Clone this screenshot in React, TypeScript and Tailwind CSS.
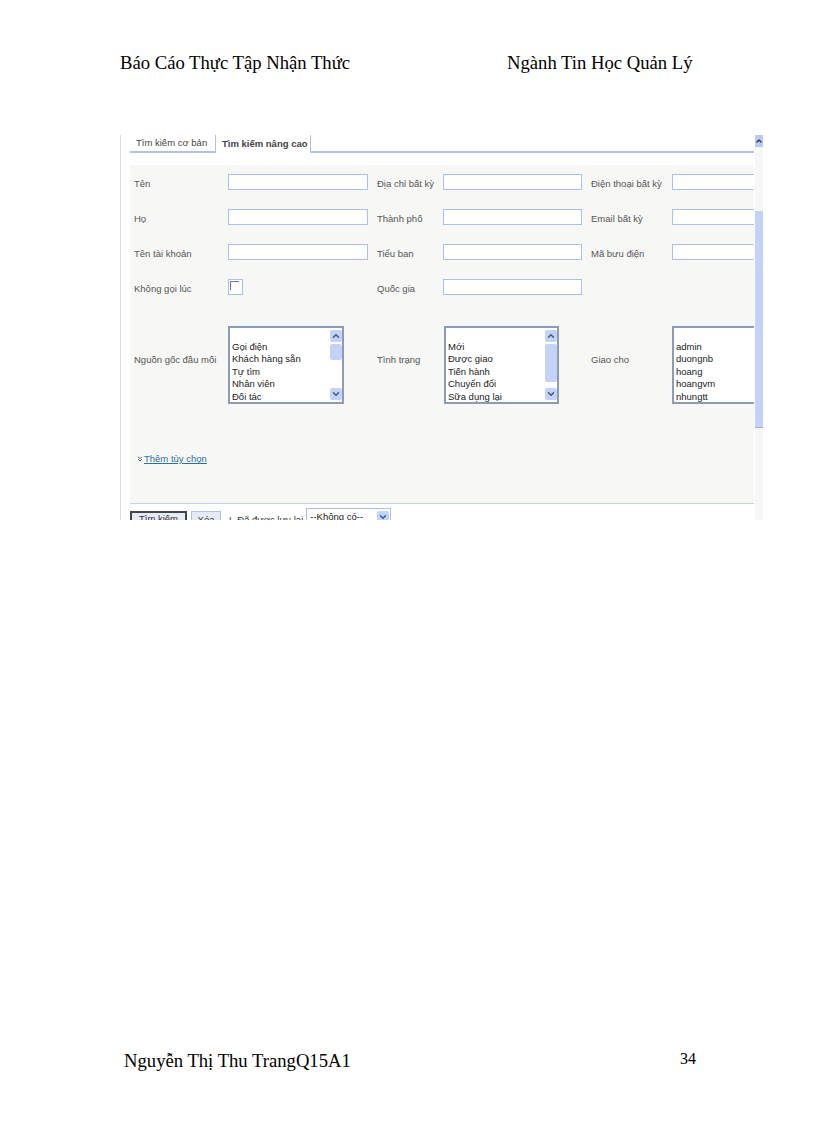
import React from 'react';
import { ChevronUp, ChevronDown, ChevronsDown } from 'lucide-react';

const serif = "font-['Liberation_Serif',serif]";

function Label({ text, indent }: { text: string; indent?: boolean }) {
  return <div className={`pt-[3px] text-[9.5px] leading-[12px] text-[#555] whitespace-nowrap ${indent ? 'pl-[9px]' : ''}`}>{text}</div>;
}

function Field() {
  return <input readOnly className="h-[16px] w-full border border-[#a9c0ee] bg-white block" />;
}

function ScrollBtn({ down }: { down?: boolean }) {
  return (
    <div className="w-[12px] h-[12px] shrink-0 bg-[#c3d2f7] rounded-[2px] flex items-center justify-center text-[#3d5a8c]">
      {down ? <ChevronDown size={10} strokeWidth={3.5} /> : <ChevronUp size={10} strokeWidth={3.5} />}
    </div>
  );
}

function ListBox({ items, thumb, bar = true, className }: { items: string[]; thumb?: string; bar?: boolean; className: string }) {
  return (
    <div className={`h-[78px] border-2 border-[#8c9cb8] bg-white flex overflow-hidden ${className}`}>
      <div className="flex-1 pl-[2px] pt-[13px] text-[9.5px] leading-[12.4px] text-[#222] whitespace-nowrap">
        {items.map(item => <div key={item}>{item}</div>)}
      </div>
      {bar && (
        <div className="w-[12px] py-[2px] flex flex-col items-center">
          <ScrollBtn />
          <div className="flex-1 w-[12px] pt-[2px]">
            <div className={`bg-[#c3d2f7] rounded-[2px] w-[12px] ${thumb}`} />
          </div>
          <ScrollBtn down />
        </div>
      )}
    </div>
  );
}

export default function App() {
  return (
    <div className="h-[1123px] w-[816px] bg-white flex flex-col text-black font-['Liberation_Sans',sans-serif]">
      {/* Page header */}
      <div className={`flex pl-[120px] pt-[51px] text-[18.67px] leading-[24px] ${serif}`}>
        <span className="w-[387px]">Báo Cáo Thực Tập Nhận Thức</span>
        <span>Ngành Tin Học Quản Lý</span>
      </div>

      {/* Pasted screenshot */}
      <div className="mt-[60px] ml-[120px] w-[644px] h-[385px] overflow-hidden flex border-l border-[#d5dfd0]">
        <div className="w-[624px] ml-[9px] overflow-hidden shrink-0">
          {/* Tabs */}
          <div className="h-[18px] flex items-end border-b-2 border-[#b4c4d8]">
            <div className="w-[85px] h-[16px] pl-[6px] pt-[2px] text-[9.5px] leading-[12px] text-[#444] whitespace-nowrap">Tìm kiếm cơ bản</div>
            <div className="w-[96px] h-[18px] -mb-[2px] pl-[6px] pt-[3px] bg-white border-x border-[#b4c4d8] text-[9.5px] leading-[12px] font-bold text-[#444] whitespace-nowrap">Tìm kiếm nâng cao</div>
          </div>

          {/* Search form */}
          <div className="mt-[12px] h-[339px] bg-[#f7f7f6] border-b border-[#c5d2e6] pl-[4px] pt-[9px]">
            <div className="grid grid-cols-[94px_140px_75px_139px_90px_140px] gap-y-[19px] items-center w-[700px]">
              <Label text="Tên" /><Field /><Label text="Địa chỉ bất kỳ" indent /><Field /><Label text="Điện thoại bất kỳ" indent /><Field />
              <Label text="Họ" /><Field /><Label text="Thành phố" indent /><Field /><Label text="Email bất kỳ" indent /><Field />
              <Label text="Tên tài khoản" /><Field /><Label text="Tiểu ban" indent /><Field /><Label text="Mã bưu điện" indent /><Field />
              <Label text="Không gọi lúc" />
              <div className="w-[15px] h-[16px] border border-[#a9c0ee] bg-white p-[1px]">
                <div className="h-[9px] w-[9px] border-t border-l border-[#777]" />
              </div>
              <Label text="Quốc gia" indent /><Field /><div /><div />

              <div className="self-start mt-[37px]"><Label text="Nguồn gốc đầu mối" /></div>
              <ListBox className="mt-[12px] w-[116px]" thumb="h-[16px]" items={['Gọi điện', 'Khách hàng sẵn', 'Tự tìm', 'Nhân viên', 'Đối tác']} />
              <div className="self-start mt-[37px]"><Label text="Tình trạng" indent /></div>
              <ListBox className="mt-[12px] ml-[1px] w-[115px]" thumb="h-[38px]" items={['Mới', 'Được giao', 'Tiến hành', 'Chuyển đổi', 'Sữa dụng lại']} />
              <div className="self-start mt-[37px]"><Label text="Giao cho" indent /></div>
              <ListBox className="mt-[12px] w-[140px]" bar={false} items={['admin', 'duongnb', 'hoang', 'hoangvm', 'nhungtt']} />
            </div>

            <div className="mt-[49px] pl-[2px] flex items-center text-[9.5px] leading-[12px]">
              <ChevronsDown size={8} strokeWidth={3} className="text-[#4a5f80]" />
              <span className="underline text-[#2a70a8]">Thêm tùy chọn</span>
            </div>
          </div>

          {/* Action bar */}
          <div className="flex items-start pt-[4px] text-[9.5px] leading-[12px] text-[#333]">
            <div className="mt-[3px] w-[57px] h-[16px] border-2 border-[#444] bg-[#e6e9f6] text-center">Tìm kiếm</div>
            <div className="mt-[3px] ml-[4px] w-[30px] h-[16px] border border-[#b4c4d8] bg-[#e6e9f6] text-center pt-[2px]">Xóa</div>
            <span className="mt-[6px] ml-[8px]">L</span>
            <span className="mt-[6px] ml-[3px]">Đã được lưu lại</span>
            <div className="ml-[3px] w-[85px] h-[18px] border border-[#a9c0ee] bg-white flex items-center justify-between pl-[3px] pr-[1px] text-[#222]">
              <span>--Không có--</span>
              <ScrollBtn down />
            </div>
          </div>
        </div>

        {/* Outer scrollbar */}
        <div className="w-[8px] ml-[1px] bg-[#f7f7f6] flex flex-col shrink-0">
          <div className="h-[12px] bg-[#b9c9f2] flex items-center justify-center text-[#334]">
            <ChevronUp size={8} strokeWidth={4} />
          </div>
          <div className="mt-[64px] h-[217px] bg-[#c3d2f7] border-b border-[#9fb2e0]" />
        </div>
      </div>

      {/* Page footer */}
      <div className={`mt-auto mb-[50px] flex items-start pl-[124px] ${serif}`}>
        <span className="w-[556px] text-[18.67px] leading-[24px]">Nguyễn Thị Thu TrangQ15A1</span>
        <span className="text-[16px] leading-[20px]">34</span>
      </div>
    </div>
  );
}
